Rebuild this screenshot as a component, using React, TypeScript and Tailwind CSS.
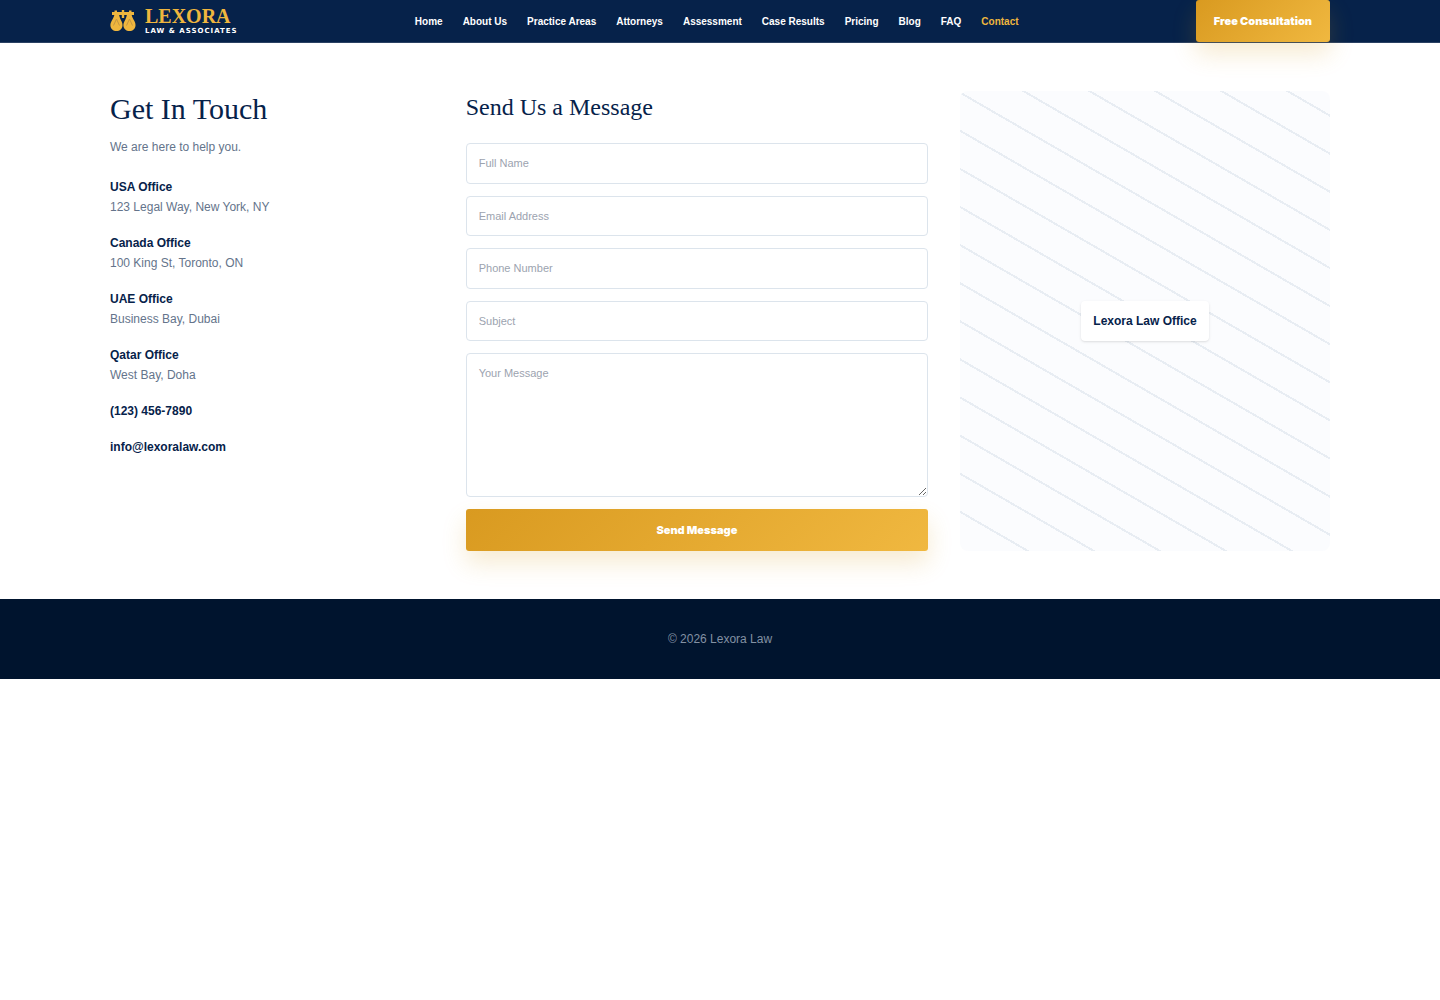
import React from 'react'

const navLinks = [
  'Home',
  'About Us',
  'Practice Areas',
  'Attorneys',
  'Assessment',
  'Case Results',
  'Pricing',
  'Blog',
  'FAQ',
  'Contact',
]

const offices = [
  { name: 'USA Office', address: '123 Legal Way, New York, NY' },
  { name: 'Canada Office', address: '100 King St, Toronto, ON' },
  { name: 'UAE Office', address: 'Business Bay, Dubai' },
  { name: 'Qatar Office', address: 'West Bay, Doha' },
]

const fields = [
  { id: 'name', label: 'Full Name', type: 'text' },
  { id: 'email', label: 'Email Address', type: 'email' },
  { id: 'phone', label: 'Phone Number', type: 'tel' },
  { id: 'subject', label: 'Subject', type: 'text' },
]

const fieldClass =
  'w-full rounded-sm border border-[#dce4ec] bg-white px-3 text-[11px] text-[#06224a] placeholder:text-[#9ca3af] focus:outline-none focus:border-[#d99a20]'

const buttonClass =
  'h-[42px] rounded-[3px] bg-linear-[135deg,#d99a20,#f0b840] font-[Inter,sans-serif] text-[11px] font-black text-white shadow-[0_12px_25px_rgba(217,154,32,0.2)]'

const ScalesLogo: React.FC = () => (
  <svg width="26" height="22" viewBox="0 0 26 22" fill="#efb63e" aria-hidden="true">
    <path d="M2 2h2.500V.500h2.500V2h4.800V0h2.400v2h4.800V.500h2.500V2H24v3h-9.800v3h-2.400V5H2z" />
    <path d="M4.500 4h4.500c.3 3 1.300 4.800 2.400 7 .8 1.600 1.200 3 1.100 4.500-.2 3.500-2.700 5.500-6 5.500S.600 19 .400 15.500C.300 14 .800 12.600 1.600 11 2.700 8.800 4.200 7 4.500 4z" />
    <path d="M17 4h4.500c.3 3 1.800 4.800 2.900 7 .8 1.600 1.200 3 1.100 4.500-.2 3.500-2.700 5.500-6 5.500s-5.900-2-6.100-5.500c-.1-1.500.4-2.900 1.200-4.500 1.100-2.200 2.100-4 2.400-7z" />
    <path d="M3.500 15.500 6.500 9l3 6.500M16.500 15.500l3-6.500 3 6.500" fill="none" stroke="#c39543" strokeWidth="1" />
  </svg>
)

const Header: React.FC = () => (
  <header className="border-b border-[#2a4163] bg-[#06224a]">
    <div className="mx-auto flex max-w-[1220px] items-center justify-between">
      <a href="#" className="flex items-center gap-[9px]">
        <ScalesLogo />
        <span className="flex flex-col">
          <span className="font-['Liberation_Serif',serif] text-[20px] leading-5 font-bold text-[#efb63e]">
            LEXORA
          </span>
          <span className="font-['DejaVu_Sans',sans-serif] text-[7px] leading-[10px] font-bold tracking-[1px] text-white">
            LAW &amp; ASSOCIATES
          </span>
        </span>
      </a>
      <nav className="flex gap-5">
        {navLinks.map((link) => (
          <a
            key={link}
            href="#"
            className={`text-[10px] font-bold ${link === 'Contact' ? 'text-[#efb63e]' : 'text-white'}`}
          >
            {link}
          </a>
        ))}
      </nav>
      <button type="button" className={`${buttonClass} px-[18px]`}>
        Free Consultation
      </button>
    </div>
  </header>
)

const ContactInfo: React.FC = () => (
  <div className="text-xs leading-5 text-[#64748b]">
    <h1 className="mb-2.5 font-['Liberation_Serif',serif] text-3xl leading-9 text-[#06224a]">Get In Touch</h1>
    <p className="mb-5">We are here to help you.</p>
    <div className="flex flex-col gap-4">
      {offices.map((office) => (
        <div key={office.name}>
          <p className="font-bold text-[#06224a]">{office.name}</p>
          <p>{office.address}</p>
        </div>
      ))}
      <a href="tel:1234567890" className="font-bold text-[#06224a]">(123) 456-7890</a>
      <a href="mailto:info@lexoralaw.com" className="font-bold text-[#06224a]">info@lexoralaw.com</a>
    </div>
  </div>
)

const ContactForm: React.FC = () => (
  <form className="flex flex-col gap-3" onSubmit={(e) => e.preventDefault()}>
    <h2 className="mb-2 font-['Liberation_Serif',serif] text-2xl leading-8 text-[#06224a]">Send Us a Message</h2>
    {fields.map((field) => (
      <input
        key={field.id}
        id={field.id}
        type={field.type}
        placeholder={field.label}
        aria-label={field.label}
        className={`${fieldClass} min-h-10 flex-1`}
      />
    ))}
    <textarea
      id="message"
      placeholder="Your Message"
      aria-label="Your Message"
      className={`${fieldClass} block h-36 resize-y py-[11px]`}
    />
    <button type="submit" className={buttonClass}>
      Send Message
    </button>
  </form>
)

const OfficeMap: React.FC = () => (
  <div className="flex min-h-[460px] items-center justify-center rounded-lg bg-[repeating-linear-gradient(30deg,#e8edf3_0,#e8edf3_2px,#fbfcfe_2px,#fbfcfe_33px)]">
    <div className="rounded-sm bg-white px-3 py-2.5 text-xs leading-5 font-bold text-[#06224a] shadow-sm">
      Lexora Law Office
    </div>
  </div>
)

export default function App() {
  return (
    <div className="min-h-screen bg-white font-['Liberation_Sans',Arial,sans-serif]">
      <Header />
      <main className="mx-auto grid max-w-[1220px] grid-cols-[7fr_10fr_8fr] gap-8 py-12">
        <ContactInfo />
        <ContactForm />
        <OfficeMap />
      </main>
      <footer className="bg-[#00142e] py-[30px] text-center text-xs leading-5 text-[#8391a3]">
        © 2026 Lexora Law
      </footer>
    </div>
  )
}
